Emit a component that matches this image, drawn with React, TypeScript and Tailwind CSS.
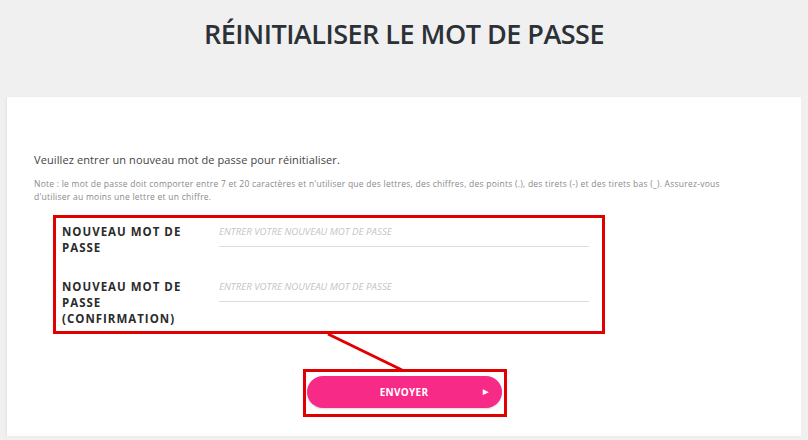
import React from "react";

const font = { fontFamily: "'Open Sans', 'Liberation Sans', sans-serif" };

function Row({ label }: { label: React.ReactNode }) {
  return (
    <div className="flex items-start">
      <div className="w-[157px] pr-[16px] text-[11.5px] leading-[16px] font-bold tracking-[1px] text-[#2b2b2b] uppercase">
        {label}
      </div>
      <div className="w-[370px] border-b border-[#dcdcdc] pb-[6px]">
        <div className="text-[9.7px] leading-[16px] italic text-[#c4c4c4] uppercase">
          Entrer votre nouveau mot de passe
        </div>
      </div>
    </div>
  );
}

export default function App() {
  return (
    <div className="relative w-[808px] h-[440px] overflow-hidden bg-[#f0f0f0]" style={font}>
      <div className="h-[97px] flex justify-center pt-[14px]">
        <h1 className="text-[27px] leading-[40px] font-semibold text-[#2c3137] tracking-[-0.5px]">
          RÉINITIALISER LE MOT DE PASSE
        </h1>
      </div>
      <div className="mx-[7px] h-[339px] bg-white shadow-[-1px_0_2px_rgba(0,0,0,0.06)] pt-[55px] px-[27px]">
        <p className="text-[11px] leading-[16px] text-[#444] tracking-[0.1px]">
          Veuillez entrer un nouveau mot de passe pour réinitialiser.
        </p>
        <p className="mt-[9px] text-[8.5px] leading-[13px] text-[#8a8a8a] tracking-[0.25px] pr-[30px]">
          Note : le mot de passe doit comporter entre 7 et 20 caractères et n'utiliser que des lettres, des chiffres, des points (.), des tirets (-) et des tirets bas (_). Assurez-vous d'utiliser au moins une lettre et un chiffre.
        </p>
        <div className="mt-[21px] ml-[28px] flex flex-col gap-[23px]">
          <Row label={<>Nouveau mot de passe</>} />
          <Row label={<>Nouveau mot de passe (confirmation)</>} />
        </div>
        <div className="mt-[49px] flex justify-center">
          <button className="relative w-[195px] h-[32px] rounded-full bg-[#f72a87] text-white text-[10px] font-bold tracking-[0.3px] shadow-[0_1px_2px_rgba(0,0,0,0.15)]">
            ENVOYER
            <span className="absolute right-[13px] top-1/2 -translate-y-1/2 text-[7px]">▶</span>
          </button>
        </div>
      </div>
      <div className="absolute left-[53px] top-[215px] w-[552px] h-[119px] border-[3px] border-[#e00000]" />
      <div className="absolute left-[303px] top-[369px] w-[204px] h-[48px] border-[3px] border-[#e00000]" />
      <svg className="absolute left-0 top-0" width="808" height="440">
        <line x1="328" y1="334" x2="402" y2="370" stroke="#e00000" strokeWidth="3" />
      </svg>
    </div>
  );
}
